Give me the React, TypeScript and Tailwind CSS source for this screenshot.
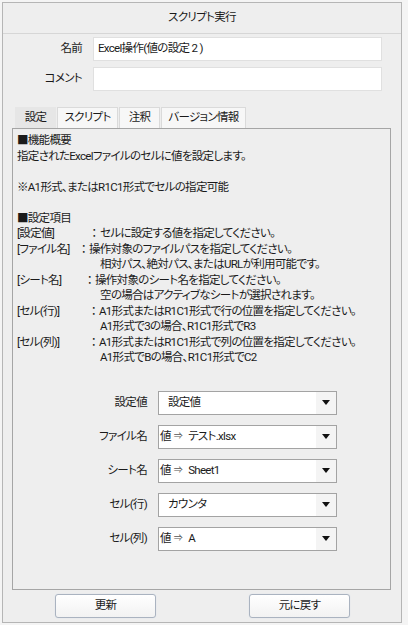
import React from "react";

const F = "font-['Roboto','Noto_Sans_CJK_JP',sans-serif] [font-feature-settings:'palt']";
const T = "text-[11.5px] tracking-[-0.06em]";

function Select({ children }: { children: React.ReactNode }) {
  return (
    <div className="flex h-[24px] w-[179px] border border-[#a3a3a3] bg-white">
      <div className={`flex flex-1 items-center overflow-hidden whitespace-nowrap ${T} text-[#1a1a1a]`}>{children}</div>
      <div className="flex w-[20px] items-center justify-center bg-[#f4f4f4]">
        <svg width="8" height="5" viewBox="0 0 8 5"><path d="M0 0 L8 0 L4 5 Z" fill="#111" /></svg>
      </div>
    </div>
  );
}

function Val({ text }: { text: string }) {
  return (
    <>
      <span className="ml-[1px]">値</span>
      <span className="ml-[3px] text-[9px] text-[#555]">⇒</span>
      <span className="ml-[6px]">{text}</span>
    </>
  );
}

function Row({ label, children }: { label: string; children: React.ReactNode }) {
  return (
    <div className="flex items-center">
      <div className={`w-[88px] pr-[1px] text-right ${T} text-[#1a1a1a]`}>{label}</div>
      <div className="ml-[10px]">{children}</div>
    </div>
  );
}

function Item({ label, lw, cw, text }: { label: string; lw: number; cw: number; text: string }) {
  return (
    <div className="flex whitespace-nowrap">
      <span style={{ width: lw }} className="inline-block shrink-0 whitespace-nowrap">{label}</span>
      <span style={{ width: cw }} className="inline-block shrink-0 text-center [font-feature-settings:normal]">：</span>
      <span>{text}</span>
    </div>
  );
}

export default function App() {
  return (
    <div className={`h-[625px] w-[408px] bg-[#f4f4f4] pl-[2px] pt-[2px] ${F}`}>
      <div className="flex h-[621px] w-[400px] flex-col border border-[#b5b5b5] bg-[#eeeeee]">
        <div className={`flex h-[31px] items-center justify-center border-b border-[#d6d6d6] ${T} text-[#1a1a1a]`}>
          スクリプト実行
        </div>
        <div className="mt-[3px] flex flex-col gap-[6px]">
          <div className="flex items-center">
            <div className={`w-[79px] text-right ${T} text-[#1a1a1a]`}>名前</div>
            <div className={`ml-[11px] flex h-[24px] w-[289px] items-center border border-[#e0e0e0] bg-white pl-[4px] ${T} text-[#1a1a1a]`}>
              Excel操作(値の設定 2 )
            </div>
          </div>
          <div className="flex items-center">
            <div className={`w-[79px] text-right ${T} text-[#1a1a1a]`}>コメント</div>
            <div className="ml-[11px] h-[24px] w-[289px] border border-[#e0e0e0] bg-white" />
          </div>
        </div>
        <div className={`ml-[12px] mt-[16px] flex h-[21px] items-stretch gap-[1px] ${T} text-[#1a1a1a]`}>
          <div className="flex w-[41px] items-center justify-center bg-[#e6e6e6]">設定</div>
          <div className="flex w-[61px] items-center justify-center border border-b-0 border-[#dadada] bg-[#f7f7f7]">スクリプト</div>
          <div className="flex w-[41px] items-center justify-center border border-b-0 border-[#dadada] bg-[#f7f7f7]">注釈</div>
          <div className="flex w-[85px] items-center justify-center border border-b-0 border-[#dadada] bg-[#f7f7f7]">バージョン情報</div>
        </div>
        <div className="ml-[9px] h-[462px] w-[379px] border border-[#a5a5a5] bg-[#eeeeee] pl-[4px] pt-[4px]">
          <div className={`${T} leading-[15.5px] text-[#1a1a1a]`}>
            <div>■機能概要</div>
            <div>指定されたExcelファイルのセルに値を設定します。</div>
            <div className="h-[15.5px]" />
            <div>※A1形式、またはR1C1形式でセルの指定可能</div>
            <div className="h-[15.5px]" />
            <div>■設定項目</div>
            <Item label="[設定値]" lw={71} cw={12} text="セルに設定する値を指定してください。" />
            <Item label="[ファイル名]" lw={61} cw={11} text="操作対象のファイルパスを指定してください。" />
            <div className="pl-[83px]">相対パス、絶対パス、またはURLが利用可能です。</div>
            <Item label="[シート名]" lw={67} cw={11} text="操作対象のシート名を指定してください。" />
            <div className="pl-[83px]">空の場合はアクティブなシートが選択されます。</div>
            <Item label="[セル(行)]" lw={71} cw={11} text="A1形式またはR1C1形式で行の位置を指定してください。" />
            <div className="pl-[83px]">A1形式で3の場合、R1C1形式でR3</div>
            <Item label="[セル(列)]" lw={71} cw={11} text="A1形式またはR1C1形式で列の位置を指定してください。" />
            <div className="pl-[83px]">A1形式でBの場合、R1C1形式でC2</div>
          </div>
          <div className="mt-[25px] flex flex-col gap-[10px] pl-[43px]">
            <Row label="設定値">
              <Select><span className="ml-[9px]">設定値</span></Select>
            </Row>
            <Row label="ファイル名">
              <Select><Val text="テスト.xlsx" /></Select>
            </Row>
            <Row label="シート名">
              <Select><Val text="Sheet1" /></Select>
            </Row>
            <Row label="セル(行)">
              <Select><span className="ml-[9px]">カウンタ</span></Select>
            </Row>
            <Row label="セル(列)">
              <Select><Val text="A" /></Select>
            </Row>
          </div>
        </div>
        <div className={`mt-[4px] flex ${T} text-[#1a1a1a]`}>
          <button className="ml-[52px] flex h-[24px] w-[101px] items-center justify-center rounded-[3px] border border-[#aab3c0] bg-gradient-to-b from-white to-[#f2f2f2] shadow-[0_0_1px_#c8d8ec]">
            更新
          </button>
          <button className="ml-[93px] flex h-[24px] w-[101px] items-center justify-center rounded-[3px] border border-[#aab3c0] bg-gradient-to-b from-white to-[#f2f2f2] shadow-[0_0_1px_#c8d8ec]">
            元に戻す
          </button>
        </div>
      </div>
    </div>
  );
}
